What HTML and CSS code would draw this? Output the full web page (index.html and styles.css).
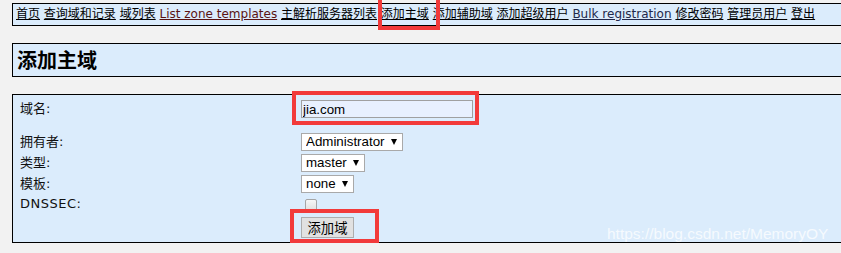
FILE: index.html
```html
<!DOCTYPE html>
<html lang="zh">
<head>
<meta charset="utf-8">
<title>添加主域</title>
<link rel="stylesheet" href="styles.css">
</head>
<body>
<div class="page">
  <nav class="menu">
    <a href="#">首页</a> <a href="#">查询域和记录</a> <a href="#">域列表</a> <a href="#" class="lat visited">List zone templates</a> <a href="#">主解析服务器列表</a> <a href="#" class="current">添加主域</a> <a href="#">添加辅助域</a> <a href="#">添加超级用户</a> <a href="#" class="lat bulk">Bulk registration</a> <a href="#">修改密码</a> <a href="#">管理员用户</a> <a href="#">登出</a>
  </nav>

  <div class="title"><h2>添加主域</h2></div>

  <form class="panel">
    <div class="row row-first">
      <label class="lbl">域名:</label>
      <input class="txt" type="text" value="jia.com">
    </div>
    <div class="row row-gap">
      <label class="lbl">拥有者:</label>
      <span class="sel"><select class="w-admin"><option>Administrator</option></select></span>
    </div>
    <div class="row">
      <label class="lbl">类型:</label>
      <span class="sel"><select class="w-master"><option>master</option></select></span>
    </div>
    <div class="row">
      <label class="lbl">模板:</label>
      <span class="sel"><select class="w-none"><option>none</option></select></span>
    </div>
    <div class="row row-check">
      <label class="lbl lat-lbl">DNSSEC:</label>
      <input class="chk" type="checkbox">
    </div>
    <div class="row row-btn">
      <span class="lbl"></span>
      <button class="btn" type="button">添加域</button>
    </div>
  </form>
</div>

<div class="mark mark-nav"></div>
<div class="mark mark-input"></div>
<div class="mark mark-btn"></div>
<div class="watermark">https://blog.csdn.net/MemoryOY</div>
</body>
</html>
```

FILE: styles.css
```css
html, body {
  margin: 0;
  padding: 0;
}
body {
  background: #f2f2f2;
  overflow: hidden;
  width: 841px;
  height: 253px;
  position: relative;
  font-family: "DejaVu Sans", "Noto Sans CJK SC", sans-serif;
  color: #000;
}
.page {
  padding: 3px 0 0 12px;
}
.menu {
  border: 1px solid #000;
  border-right: none;
  background: #dbecfc;
  height: 21px;
  line-height: 21px;
  padding: 0 0 0 3px;
  font-size: 12px;
  white-space: nowrap;
  overflow: hidden;
}
.menu a {
  color: #000;
  text-decoration: underline;
}
.menu a.visited {
  color: #5a1212;
}
.menu a.bulk {
  color: #22284a;
}
.title {
  margin-top: 17px;
  border: 1px solid #000;
  border-right: none;
  background: #dbecfc;
  height: 32px;
}
.title h2 {
  margin: 0;
  padding-left: 4px;
  font-family: "Noto Sans CJK SC", serif;
  font-size: 20px;
  font-weight: bold;
  line-height: 32px;
}
.panel {
  margin: 17px 0 0 0;
  border: 1px solid #000;
  border-right: none;
  background: #dbecfc;
  padding: 5px 0 4px 0;
  display: flex;
  flex-direction: column;
  gap: 3px;
}
.row {
  display: flex;
  align-items: center;
  height: 18px;
}
.row-gap {
  margin-top: 12px;
}
.row-btn {
  height: 21px;
}
.lbl {
  width: 281px;
  padding-left: 7px;
  flex: none;
  font-size: 13px;
  color: #111;
  margin-top: -3px;
  font-family: "DejaVu Sans", "Noto Sans CJK SC", sans-serif;
}
.lat-lbl {
  letter-spacing: 0.5px;
}
.txt {
  box-sizing: border-box;
  width: 172px;
  height: 18px;
  margin: 0;
  padding: 0 1px;
  border: 1px solid #a0a0a0;
  background: #e8f0fe;
  font-family: "Liberation Sans", Arial, sans-serif;
  font-size: 13.33px;
  color: #000;
  outline: none;
}
.sel {
  position: relative;
  display: inline-block;
  height: 18px;
}
.sel::after {
  content: "";
  position: absolute;
  right: 6px;
  top: 6px;
  border-left: 3.5px solid transparent;
  border-right: 3.5px solid transparent;
  border-top: 6px solid #000;
  pointer-events: none;
}
.sel select {
  -webkit-appearance: none;
  appearance: none;
  box-sizing: border-box;
  height: 18px;
  margin: 0;
  padding: 0 0 0 4px;
  border: 1px solid #a9a9a9;
  border-radius: 0;
  background: #fff;
  font-family: "Liberation Sans", Arial, sans-serif;
  font-size: 13.33px;
  line-height: 16px;
  color: #000;
  display: block;
}
.w-admin { width: 102px; }
.w-master { width: 64px; }
.w-none { width: 53px; }
.chk {
  -webkit-appearance: none;
  appearance: none;
  box-sizing: border-box;
  width: 12px;
  height: 13px;
  margin: 3px 0 0 4px;
  border: 1px solid #a5a5a5;
  border-radius: 2px;
  background: linear-gradient(#f6f6f6, #dedede);
  align-self: flex-start;
}
.btn {
  box-sizing: border-box;
  width: 53px;
  height: 21px;
  margin: 0;
  padding: 0;
  border: 1px solid #adadad;
  background: #e1e1e1;
  font-family: "Noto Sans CJK SC", sans-serif;
  font-size: 13.33px;
  line-height: 19px;
  color: #000;
}
.mark {
  position: absolute;
  box-sizing: border-box;
  border: 4px solid #f23a3a;
}
.mark-nav {
  left: 378px;
  top: -4px;
  width: 62px;
  height: 34px;
}
.mark-input {
  left: 292px;
  top: 91px;
  width: 187px;
  height: 34px;
}
.mark-btn {
  left: 290px;
  top: 209px;
  width: 89px;
  height: 34px;
}
.watermark {
  position: absolute;
  left: 607px;
  top: 225px;
  font-family: "Liberation Sans", Arial, sans-serif;
  font-size: 15.5px;
  line-height: 18px;
  color: rgba(255, 255, 255, 0.75);
  white-space: nowrap;
}
```
